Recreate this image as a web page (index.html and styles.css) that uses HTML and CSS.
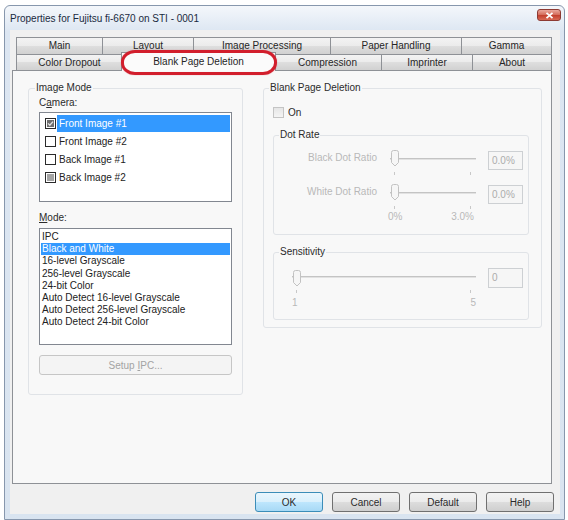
FILE: index.html
```html
<!DOCTYPE html>
<html lang="en">
<head>
  <meta charset="UTF-8" />
  <title>Properties for Fujitsu fi-6670 on STI - 0001</title>
  <link rel="stylesheet" href="styles.css">
</head>
<body>

  <div class="window">
    <div class="titlebar">
      <span class="title">Properties for Fujitsu fi-6670 on STI - 0001</span>
      <span class="close-btn">
        <svg width="9" height="7" viewBox="0 0 9 7"><path d="M1.5 0.8 L7.5 6.2 M7.5 0.8 L1.5 6.2" stroke="#ffffff" stroke-width="1.8"/></svg>
      </span>
    </div>

    <div class="client">
      <div class="tabs">
        <div class="tab-row row-back">
          <div class="tab">Main</div>
          <div class="tab">Layout</div>
          <div class="tab">Image Processing</div>
          <div class="tab">Paper Handling</div>
          <div class="tab">Gamma</div>
        </div>
        <div class="tab-row row-front">
          <div class="tab">Color Dropout</div>
          <div class="tab active">Blank Page Deletion<span class="mark-ring"></span></div>
          <div class="tab">Compression</div>
          <div class="tab">Imprinter</div>
          <div class="tab">About</div>
        </div>
      </div>

      <div class="panel">
        <fieldset class="group image-mode">
          <legend>Image Mode</legend>
          <div class="field-label">C<u>a</u>mera:</div>
          <div class="listbox camera-list">
            <div class="check-item">
              <svg class="cb" width="11" height="11" viewBox="0 0 11 11"><rect x="0.5" y="0.5" width="10" height="10" fill="#fff" stroke="#2a2a2a"/><rect x="2" y="2" width="7" height="7" fill="#6e6e6e"/><path d="M3 5.4 L4.8 7.2 L8 3.6" fill="none" stroke="#e4e4e4" stroke-width="1.3"/></svg>
              <span class="item-text selected">Front Image #1</span>
            </div>
            <div class="check-item">
              <svg class="cb" width="11" height="11" viewBox="0 0 11 11"><rect x="0.5" y="0.5" width="10" height="10" fill="#fff" stroke="#2a2a2a"/></svg>
              <span class="item-text">Front Image #2</span>
            </div>
            <div class="check-item">
              <svg class="cb" width="11" height="11" viewBox="0 0 11 11"><rect x="0.5" y="0.5" width="10" height="10" fill="#fff" stroke="#2a2a2a"/></svg>
              <span class="item-text">Back Image #1</span>
            </div>
            <div class="check-item">
              <svg class="cb" width="11" height="11" viewBox="0 0 11 11"><rect x="0.5" y="0.5" width="10" height="10" fill="#fff" stroke="#2a2a2a"/><rect x="2" y="2" width="7" height="7" fill="#a4a4a4"/></svg>
              <span class="item-text">Back Image #2</span>
            </div>
          </div>

          <div class="field-label mode-label"><u>M</u>ode:</div>
          <div class="listbox mode-list">
            <div class="mode-item">IPC</div>
            <div class="mode-item selected">Black and White</div>
            <div class="mode-item">16-level Grayscale</div>
            <div class="mode-item">256-level Grayscale</div>
            <div class="mode-item">24-bit Color</div>
            <div class="mode-item">Auto Detect 16-level Grayscale</div>
            <div class="mode-item">Auto Detect 256-level Grayscale</div>
            <div class="mode-item">Auto Detect 24-bit Color</div>
          </div>

          <button class="setup-btn" disabled>Setup <u>I</u>PC...</button>
        </fieldset>

        <fieldset class="group blank-page">
          <legend>Blank Page Deletion</legend>
          <label class="on-check">
            <span class="cb-off"></span>
            <span>On</span>
          </label>

          <fieldset class="group sub-group dot-rate">
            <legend>Dot Rate</legend>
            <div class="slider-row">
              <span class="slider-label">Black Dot Ratio</span>
              <div class="slider dot-slider">
                <span class="thumb"><svg width="10" height="17" viewBox="0 0 10 17"><path d="M1.5 2.5 Q1.5 0.5 3.5 0.5 H6.5 Q8.5 0.5 8.5 2.5 V12.5 L5 16 L1.5 12.5 Z" fill="#f6f6f6" stroke="#c2c2c2"/></svg></span>
              </div>
              <span class="edit">0.0%</span>
            </div>
            <div class="slider-row second">
              <span class="slider-label">White Dot Ratio</span>
              <div class="slider dot-slider">
                <span class="thumb"><svg width="10" height="17" viewBox="0 0 10 17"><path d="M1.5 2.5 Q1.5 0.5 3.5 0.5 H6.5 Q8.5 0.5 8.5 2.5 V12.5 L5 16 L1.5 12.5 Z" fill="#f6f6f6" stroke="#c2c2c2"/></svg></span>
              </div>
              <span class="edit">0.0%</span>
            </div>
            <div class="scale dot-scale">
              <span>0%</span>
              <span>3.0%</span>
            </div>
          </fieldset>

          <fieldset class="group sub-group sensitivity">
            <legend>Sensitivity</legend>
            <div class="slider-row">
              <div class="slider sens-slider">
                <span class="thumb"><svg width="10" height="17" viewBox="0 0 10 17"><path d="M1.5 2.5 Q1.5 0.5 3.5 0.5 H6.5 Q8.5 0.5 8.5 2.5 V12.5 L5 16 L1.5 12.5 Z" fill="#f6f6f6" stroke="#c2c2c2"/></svg></span>
              </div>
              <span class="edit">0</span>
            </div>
            <div class="scale sens-scale">
              <span>1</span>
              <span>5</span>
            </div>
          </fieldset>
        </fieldset>
      </div>

      <div class="buttons">
        <button class="dlg-btn default">OK</button>
        <button class="dlg-btn">Cancel</button>
        <button class="dlg-btn">Default</button>
        <button class="dlg-btn">Help</button>
      </div>
    </div>
  </div>

</body>
</html>
```

FILE: styles.css
```css
body {
  margin: 0;
  background: #ffffff;
  font-family: "Liberation Sans", Arial, sans-serif;
  font-size: 10px;
  color: #2b2b2b;
}

/* window frame */
.window {
  width: 550px;
  height: 513px;
  margin: 5px 0 0 4px;
  padding: 0 4px 0 5px;
  border: 1px solid #8797ad;
  border-radius: 6px 6px 0 0;
  background: linear-gradient(#f4f7fb, #dce6f2 26px, #d9e4f0);
  display: flex;
  flex-direction: column;
}

.titlebar {
  height: 24px;
  display: flex;
  align-items: center;
  justify-content: space-between;
}

.title {
  font-size: 10px;
  color: #1a2a40;
}

.close-btn {
  align-self: flex-start;
  margin: 3px -1px 0 0;
  width: 24px;
  height: 12px;
  border: 1px solid #8d3a33;
  border-radius: 3px;
  box-sizing: border-box;
  background: linear-gradient(#eaa89c, #d5705f 45%, #c3412f 55%, #d86a55);
  display: flex;
  align-items: center;
  justify-content: center;
}

/* dialog body */
.client {
  height: 484px;
  box-sizing: border-box;
  padding: 7px 8px 0 2px;
  background: #f0f0f0;
  display: flex;
  flex-direction: column;
}

.tabs {
  padding-left: 4px;
}

.tab-row {
  display: grid;
}

.row-back {
  height: 17px;
  grid-template-columns: 87fr 91fr 137fr 131fr 90fr;
}

.row-front {
  height: 16px;
  grid-template-columns: 107fr 151fr 108fr 91fr 79fr;
}

.tab {
  border: 1px solid #8e9196;
  border-bottom: none;
  margin-left: -1px;
  background: linear-gradient(#f3f3f3, #ebebeb 50%, #dedede 50%, #d1d1d1);
  text-align: center;
  line-height: 15px;
  color: #262626;
  white-space: nowrap;
}

.tab:first-child {
  margin-left: 0;
}

.tab.active {
  position: relative;
  z-index: 1;
  margin: -2px -2px -1px -2px;
  background: #fbfbfb;
  line-height: 17px;
}

.mark-ring {
  position: absolute;
  left: -1px;
  right: -2px;
  top: -3px;
  bottom: -4px;
  border: 3px solid #d21e2c;
  border-radius: 14px / 12px;
  box-shadow: 0 0 1px rgba(210, 30, 44, 0.6);
}

.panel {
  height: 414px;
  box-sizing: border-box;
  border: 1px solid #8e9196;
  background: #f8f8f8;
  padding: 11px 0 0 15px;
  display: flex;
  align-items: flex-start;
  gap: 20px;
}

/* group boxes */
.group {
  margin: 0;
  min-width: 0;
  border: 1px solid #e0e3e7;
  border-radius: 3px;
}

.group legend {
  padding: 0 1px;
  margin-left: -4px;
  line-height: 12px;
  color: #2b2b2b;
}

.image-mode {
  width: 215px;
  box-sizing: border-box;
  padding: 3px 10px 19px 10px;
}

.field-label {
  line-height: 12px;
}

.mode-label {
  margin-top: 10px;
}

.listbox {
  background: #ffffff;
  border: 1px solid #828790;
  box-sizing: border-box;
}

.camera-list {
  margin-top: 3px;
  height: 90px;
  padding: 2px 1px 0 5px;
}

.check-item {
  height: 18px;
  display: flex;
  align-items: flex-start;
}

.cb {
  margin-top: 3px;
  flex: none;
}

.item-text {
  flex: 1;
  margin-left: 1px;
  padding-left: 2px;
  height: 17px;
  line-height: 17px;
  color: #222;
}

.item-text.selected,
.mode-item.selected {
  background: #3399ff;
  color: #ffffff;
}

.mode-list {
  margin-top: 4px;
  height: 117px;
  padding: 2px 1px 0 1px;
}

.mode-item {
  line-height: 12.2px;
  padding-left: 1px;
  color: #222;
}

.setup-btn {
  display: block;
  width: 193px;
  height: 20px;
  margin-top: 10px;
  border: 1px solid #c6c6c6;
  border-radius: 3px;
  background: #f4f4f4;
  font-family: inherit;
  font-size: 10px;
  color: #a3a3a3;
}

.blank-page {
  width: 279px;
  box-sizing: border-box;
  padding: 12px 12px 7px 9px;
}

.on-check {
  display: flex;
  align-items: center;
  gap: 4px;
  height: 12px;
}

.cb-off {
  width: 11px;
  height: 11px;
  box-sizing: border-box;
  border: 1px solid #c4c4c4;
  background: linear-gradient(#e6e6e6, #f4f4f4);
}

.sub-group {
  margin-top: 11px;
  width: 256px;
  box-sizing: border-box;
  padding: 10px 4px 0 0;
}

.sub-group legend {
  margin-left: 5px;
}

.dot-rate {
  padding-bottom: 11px;
}

.sensitivity {
  padding-bottom: 10px;
}

.slider-row {
  display: flex;
  align-items: flex-start;
  height: 19px;
}

.slider-row.second {
  margin-top: 15px;
}

.sensitivity .slider-row {
  height: 20px;
}

.slider-label {
  width: 103px;
  text-align: right;
  line-height: 13px;
  color: #b8b8b8;
}

/* disabled trackbar: groove, thumb and end ticks */
.slider {
  position: relative;
  height: 19px;
  flex: none;
}

.dot-slider {
  width: 86px;
  margin-left: 13px;
}

.sens-slider {
  width: 184px;
  margin-left: 18px;
  height: 20px;
}

.slider::before {
  content: "";
  position: absolute;
  left: 0;
  right: 0;
  top: 7px;
  height: 1px;
  background: #c4c4c4;
  border-bottom: 1px solid #e2e2e2;
}

.sens-slider::before {
  top: 8px;
}

.slider::after {
  content: "";
  position: absolute;
  left: 4px;
  right: 5px;
  top: 21px;
  height: 3px;
  border-left: 1px solid #c8c8c8;
  border-right: 1px solid #c8c8c8;
}

.sens-slider::after {
  top: 22px;
}

.thumb {
  position: absolute;
  left: 0;
  top: -1px;
  display: flex;
}

.sens-slider .thumb {
  top: 2px;
}

.edit {
  width: 35px;
  height: 19px;
  margin-left: 12px;
  box-sizing: border-box;
  border: 1px solid #cdd0d3;
  background: #f6f6f6;
  padding-left: 3px;
  line-height: 17px;
  color: #acacac;
  flex: none;
}

.sensitivity .edit {
  height: 20px;
  line-height: 18px;
}

.scale {
  display: flex;
  justify-content: space-between;
  line-height: 12px;
  color: #b8b8b8;
}

.dot-scale {
  width: 86px;
  margin: 7px 0 0 114px;
}

.sens-scale {
  width: 184px;
  margin: 9px 0 0 18px;
}

/* OK / Cancel row */
.buttons {
  display: flex;
  justify-content: flex-end;
  gap: 9px;
  margin: 8px -2px 0 0;
}

.dlg-btn {
  width: 68px;
  height: 20px;
  border: 1px solid #707070;
  border-radius: 3px;
  background: linear-gradient(#f2f2f2, #ebebeb 50%, #dddddd 50%, #cfcfcf);
  font-family: inherit;
  font-size: 10px;
  color: #2b2b2b;
  padding: 0;
}

.dlg-btn.default {
  border-color: #3c8db8;
  background: linear-gradient(#eaf6fd, #d9f0fc 50%, #bee6fd 50%, #a7d9f5);
}
```
